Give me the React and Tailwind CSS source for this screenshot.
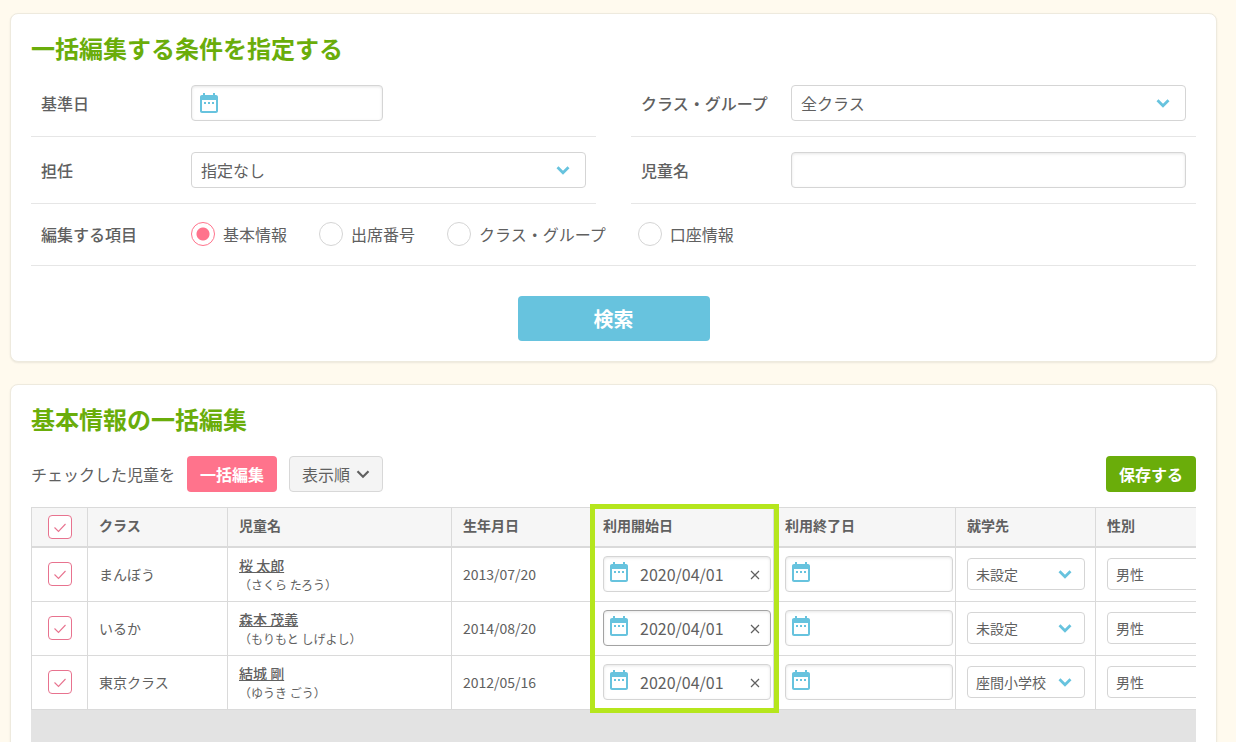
import { useState } from "react";

function CalendarIcon({ className }) {
  return (
    <svg viewBox="0 0 24 24" fill="currentColor" aria-hidden="true" className={`pointer-events-none absolute size-6 text-[#67c3de] ${className}`}>
      <path d="M9 11H7v2h2v-2zm4 0h-2v2h2v-2zm4 0h-2v2h2v-2zm2-7h-1V2h-2v2H8V2H6v2H5c-1.11 0-2 .9-2 2v14c0 1.1.89 2 2 2h14c1.1 0 2-.9 2-2V6c0-1.1-.9-2-2-2zm0 16H5V9h14v11z" />
    </svg>
  );
}

function Chevron({ className, weight = 2.8 }) {
  return (
    <svg viewBox="0 0 14 10" fill="none" stroke="currentColor" strokeWidth={weight} aria-hidden="true" className={`pointer-events-none h-2.5 w-3.5 ${className}`}>
      <path d="M1.5 2.2 7 7.700l5.500-5.500" />
    </svg>
  );
}

function Row({ label, htmlFor, children }) {
  return (
    <div className="flex border-b border-[#e6e6e6] px-2.5 py-[15px]">
      <label htmlFor={htmlFor} className="w-[150px] shrink-0 font-medium leading-9">
        {label}
      </label>
      {children}
    </div>
  );
}

function FormSelect({ id, value }) {
  return (
    <div className="relative flex-1">
      <select id={id} className="h-9 w-full appearance-none rounded border border-[#d5d5d5] bg-white px-[9px]">
        <option>{value}</option>
      </select>
      <Chevron className="absolute top-[13px] right-4 text-[#67c3de]" />
    </div>
  );
}

const inputShadow = "shadow-[inset_0_1px_3px_rgba(0,0,0,0.1)]";

function DateCell({ label, value, active }) {
  const [date, setDate] = useState(value);
  return (
    <div className="relative w-[168px]">
      <input
        type="text"
        aria-label={label}
        value={date}
        onChange={(e) => setDate(e.target.value)}
        className={`block h-9 w-full rounded border bg-white pr-7 pl-9 text-base ${inputShadow} ${active ? "border-[#a3a3a3]" : "border-[#d5d5d5]"}`}
      />
      <CalendarIcon className="top-1 left-1" />
      {date && (
        <button type="button" aria-label="クリア" onClick={() => setDate("")} className="absolute top-[11px] right-2 flex size-4 items-center justify-center">
          <svg viewBox="0 0 10 10" stroke="currentColor" strokeWidth="1.2" className="size-2.5">
            <path d="m1 1 8 8M9 1 1 9" />
          </svg>
        </button>
      )}
    </div>
  );
}

function CellSelect({ label, value }) {
  return (
    <div className="relative w-[118px]">
      <select aria-label={label} className="block h-8 w-full appearance-none rounded border border-[#d5d5d5] bg-white px-2 text-sm">
        <option>{value}</option>
      </select>
      <Chevron className="absolute top-[11px] right-[13px] text-[#67c3de]" />
    </div>
  );
}

function Check({ label }) {
  return (
    <div className="relative mx-auto size-6">
      <input type="checkbox" aria-label={label} defaultChecked className="peer block size-6 appearance-none rounded border border-[#e8738f] bg-white" />
      <svg viewBox="0 0 24 24" fill="none" stroke="#e8738f" strokeWidth="1.1" aria-hidden="true" className="pointer-events-none absolute inset-0 hidden size-6 peer-checked:block">
        <path d="m6.5 12.500 4 4 7-7.500" />
      </svg>
    </div>
  );
}

const items = ["基本情報", "出席番号", "クラス・グループ", "口座情報"];
const columns = ["クラス", "児童名", "生年月日", "利用開始日", "利用終了日", "就学先", "性別"];
const children = [
  { room: "まんぼう", name: "桜 太郎", kana: "（さくら たろう）", birth: "2013/07/20", school: "未設定" },
  { room: "いるか", name: "森本 茂義", kana: "（もりもと しげよし）", birth: "2014/08/20", school: "未設定", active: true },
  { room: "東京クラス", name: "結城 剛", kana: "（ゆうき ごう）", birth: "2012/05/16", school: "座間小学校" },
];

const card = "border border-[#eeeade] bg-white px-5 pt-5 shadow-[0_1px_2px_rgba(0,0,0,0.08)]";
const title = "text-2xl leading-7 font-bold text-[#6aad0a]";
const cell = "h-[54px] border-r border-b border-[#dadada] pb-0.5 align-middle";
const td = `${cell} pl-[11px]`;

export default function App() {
  return (
    <main className="flex min-h-screen flex-col gap-[22px] bg-[#fffaee] pt-[13px] pr-[19px] pl-2.5 font-['Noto_Sans_CJK_JP',sans-serif] text-base text-[#606060]">
      <section className={`rounded-lg pb-5 ${card}`}>
        <h2 className={`mb-2 ${title}`}>一括編集する条件を指定する</h2>
        <form onSubmit={(e) => e.preventDefault()}>
          <div className="grid grid-cols-2 gap-x-[35px]">
            <Row label="基準日" htmlFor="base-date">
              <div className="relative w-48">
                <input id="base-date" type="text" className={`block h-9 w-full rounded border border-[#d5d5d5] pl-9 ${inputShadow}`} />
                <CalendarIcon className="top-1.5 left-1.5" />
              </div>
            </Row>
            <Row label="クラス・グループ" htmlFor="group">
              <FormSelect id="group" value="全クラス" />
            </Row>
            <Row label="担任" htmlFor="teacher">
              <FormSelect id="teacher" value="指定なし" />
            </Row>
            <Row label="児童名" htmlFor="child">
              <input id="child" type="text" className={`h-9 min-w-0 flex-1 rounded border border-[#d5d5d5] px-2 ${inputShadow}`} />
            </Row>
          </div>
          <div role="radiogroup" aria-labelledby="items-label" className="flex h-[62px] items-center border-b border-[#e6e6e6] px-2.5 pb-0.5">
            <span id="items-label" className="w-[150px] shrink-0 font-medium">
              編集する項目
            </span>
            <div className="flex gap-8">
              {items.map((item, i) => (
                <label key={item} className="flex items-center gap-2 leading-[22px]">
                  <input
                    type="radio"
                    name="item"
                    defaultChecked={i === 0}
                    className="size-6 appearance-none rounded-full border border-[#d5d5d5] bg-white checked:border-[#ff738c] checked:bg-[radial-gradient(circle,#ff738c_0_6px,white_7px)]"
                  />
                  {item}
                </label>
              ))}
            </div>
          </div>
          <button type="submit" className="mx-auto mt-[30px] block h-[45px] w-48 rounded bg-[#67c3de] text-xl font-bold text-white">
            検索
          </button>
        </form>
      </section>

      <section className={`flex flex-1 flex-col rounded-t-lg ${card}`}>
        <h2 className={`mb-[23px] ${title}`}>基本情報の一括編集</h2>
        <div className="mb-[15px] flex items-center gap-3">
          <span>チェックした児童を</span>
          <button type="button" className="h-9 rounded bg-[#ff738c] px-[13px] font-bold text-white">
            一括編集
          </button>
          <button type="button" className="flex h-9 items-center gap-1.5 rounded border border-[#d8d8d8] bg-[#f4f4f4] px-3">
            表示順
            <Chevron weight={2.2} />
          </button>
          <button type="button" className="ml-auto h-9 rounded bg-[#6aad0a] px-[13px] font-bold text-white">
            保存する
          </button>
        </div>

        <div className="relative">
          <div className="overflow-hidden border-t border-l border-[#dadada]">
            <table className="w-[1204px] table-fixed border-separate border-spacing-0 text-sm">
              <colgroup>
                <col className="w-14" />
                <col className="w-[140px]" />
                <col className="w-56" />
                <col className="w-[140px]" />
                <col className="w-[182px]" />
                <col className="w-[182px]" />
                <col className="w-[140px]" />
                <col className="w-[140px]" />
              </colgroup>
              <thead>
                <tr className="bg-[#f6f6f6]">
                  <th scope="col" className="h-10 border-r border-b-2 border-[#dadada]">
                    <Check label="すべて選択" />
                  </th>
                  {columns.map((c) => (
                    <th key={c} scope="col" className="h-10 border-r border-b-2 border-[#dadada] pb-1 pl-[11px] text-left font-bold">
                      {c}
                    </th>
                  ))}
                </tr>
              </thead>
              <tbody>
                {children.map((c) => (
                  <tr key={c.name}>
                    <td className={cell}>
                      <Check label={c.name} />
                    </td>
                    <td className={td}>{c.room}</td>
                    <td className={td}>
                      <a href="#" className="block pt-0.5 font-medium leading-5 underline">
                        {c.name}
                      </a>
                      <span className="block text-xs leading-5">{c.kana}</span>
                    </td>
                    <td className={td}>{c.birth}</td>
                    <td className={td}>
                      <DateCell label="利用開始日" value="2020/04/01" active={c.active} />
                    </td>
                    <td className={td}>
                      <DateCell label="利用終了日" value="" />
                    </td>
                    <td className={td}>
                      <CellSelect label="就学先" value={c.school} />
                    </td>
                    <td className={td}>
                      <CellSelect label="性別" value="男性" />
                    </td>
                  </tr>
                ))}
              </tbody>
            </table>
          </div>
          <div className="pointer-events-none absolute -top-[3px] -bottom-[3px] left-[559px] w-[189px] border-[5px] border-[#b5e61d]" />
        </div>
        <div className="min-h-8 flex-1 bg-[#e3e3e3]" />
      </section>
    </main>
  );
}
